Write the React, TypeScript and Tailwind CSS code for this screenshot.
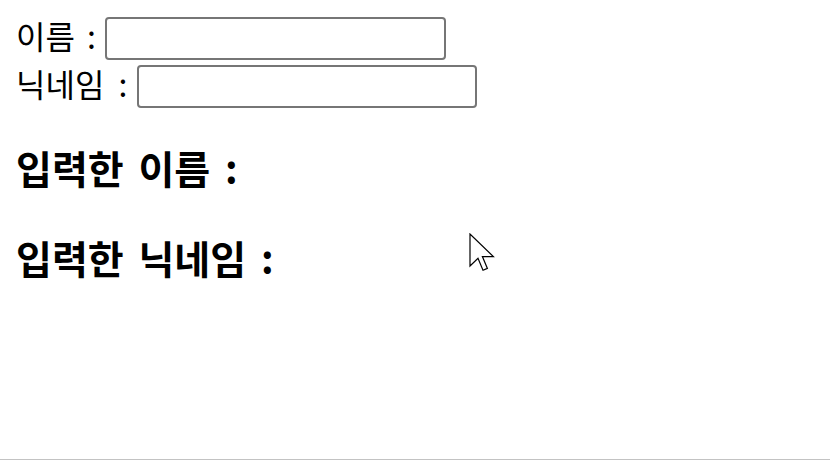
export default function App() {
  return (
    <div className="relative h-[460px] w-[830px] overflow-hidden border-b border-[#c3c3c3] bg-white p-4 font-['Malgun_Gothic','Noto_Sans_CJK_KR',sans-serif] text-[32px] text-black">
      {/* Form */}
      <div className="flex h-12 items-start">
        <span className="leading-[38px] [word-spacing:5px]">이름 :</span>
        <input
          type="text"
          className="ml-[9px] mt-px h-[43px] w-[341px] rounded-[4px] border-2 border-[#767676] bg-white outline-none"
        />
      </div>
      <div className="flex h-12 items-start">
        <span className="leading-[38px] [word-spacing:7px]">닉네임 :</span>
        <input
          type="text"
          className="ml-[10px] mt-px h-[43px] w-[340px] rounded-[4px] border-2 border-[#767676] bg-white outline-none"
        />
      </div>

      {/* Result */}
      <h3 className="mt-[30px] text-[39px] font-bold leading-[50px] [word-spacing:6px]">입력한 이름 :</h3>
      <h3 className="mt-[40px] text-[39px] font-bold leading-[50px] [word-spacing:6px]">입력한 닉네임 :</h3>

      {/* Mouse pointer */}
      <svg
        className="absolute left-[469px] top-[233px]"
        width="28"
        height="42"
        viewBox="0 0 14 21"
      >
        <path
          d="M0.5 0.5 L0.5 16.5 L4.5 12.6 L7 18.6 L9.2 17.7 L6.7 11.8 L12.2 11.8 Z"
          fill="#fff"
          stroke="#000"
          strokeWidth="0.6"
          strokeLinejoin="miter"
        />
      </svg>
    </div>
  );
}
